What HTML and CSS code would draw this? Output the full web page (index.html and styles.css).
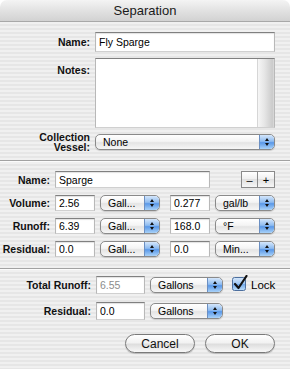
FILE: index.html
```html
<!DOCTYPE html>
<html lang="en">

<head>
    <meta charset="UTF-8">
    <meta name="viewport" content="width=device-width, initial-scale=1.0">
    <title>Separation</title>
    <link rel="stylesheet" href="styles.css">
</head>

<body>
    <div class="window">
        <div class="titlebar">Separation</div>
        <div class="pane">
            <div class="top-form">
                <label class="lbl">Name:</label>
                <div class="field">Fly Sparge</div>

                <label class="lbl lbl-top">Notes:</label>
                <div class="notes"><div class="notes-scroll"></div></div>

                <label class="lbl two-line">Collection<br>Vessel:</label>
                <div class="popup"><span>None</span><i class="arrows"></i></div>
            </div>

            <div class="sep"></div>

            <div class="step-form">
                <label class="lbl">Name:</label>
                <div class="field span3">Sparge</div>
                <div class="stepper"><span>&ndash;</span><span>+</span></div>

                <label class="lbl">Volume:</label>
                <div class="field">2.56</div>
                <div class="popup"><span>Gall...</span><i class="arrows"></i></div>
                <div class="field num2">0.277</div>
                <div class="popup"><span>gal/lb</span><i class="arrows"></i></div>

                <label class="lbl">Runoff:</label>
                <div class="field">6.39</div>
                <div class="popup"><span>Gall...</span><i class="arrows"></i></div>
                <div class="field num2">168.0</div>
                <div class="popup"><span>&deg;F</span><i class="arrows"></i></div>

                <label class="lbl">Residual:</label>
                <div class="field">0.0</div>
                <div class="popup"><span>Gall...</span><i class="arrows"></i></div>
                <div class="field num2">0.0</div>
                <div class="popup"><span>Min...</span><i class="arrows"></i></div>
            </div>

            <div class="sep sep-low"></div>

            <div class="total-form">
                <label class="lbl">Total Runoff:</label>
                <div class="field disabled">6.55</div>
                <div class="popup"><span>Gallons</span><i class="arrows"></i></div>
                <div class="check">
                    <svg width="16" height="17" viewBox="0 0 16 17">
                        <defs>
                            <linearGradient id="cb" x1="0" y1="0" x2="0" y2="1">
                                <stop offset="0" stop-color="#d7e8fb"/>
                                <stop offset="0.5" stop-color="#9cc5f2"/>
                                <stop offset="0.5" stop-color="#6ea7ea"/>
                                <stop offset="1" stop-color="#bfe0fb"/>
                            </linearGradient>
                        </defs>
                        <rect x="0.5" y="2.5" width="13" height="13" rx="2" fill="url(#cb)" stroke="#4d6f9e"/>
                        <path d="M3 9 L6.5 13 L14.5 1" fill="none" stroke="#111" stroke-width="2.2" stroke-linecap="round" stroke-linejoin="round"/>
                    </svg>
                    <span>Lock</span>
                </div>

                <label class="lbl">Residual:</label>
                <div class="field">0.0</div>
                <div class="popup"><span>Gallons</span><i class="arrows"></i></div>
            </div>

            <div class="buttons">
                <button class="push">Cancel</button>
                <button class="push">OK</button>
            </div>
        </div>
    </div>
</body>

</html>
```

FILE: styles.css
```css
body {
    margin: 0;
    background: #ffffff;
    font-family: 'Liberation Sans', Arial, sans-serif;
    font-size: 10.5px;
    color: #000000;
}

.window {
    width: 290px;
    height: 369px;
    overflow: hidden;
}

.titlebar {
    height: 21px;
    line-height: 22px;
    text-align: center;
    font-size: 13px;
    color: #1a1a1a;
    background: linear-gradient(#f4f4f4, #e2e2e2 50%, #d2d2d2);
    border-bottom: 1px solid #a8a8a8;
    border-radius: 7px 7px 0 0;
}

.pane {
    height: 347px;
    padding-top: 10px;
    box-sizing: border-box;
    background: repeating-linear-gradient(to bottom, #f0f0f0 0, #f0f0f0 2px, #e6e6e6 2px, #e6e6e6 4px);
}

.lbl {
    font-weight: bold;
    text-align: right;
    align-self: center;
    white-space: nowrap;
    color: #111;
}

.lbl-top {
    align-self: start;
    padding-top: 6px;
}

.two-line {
    line-height: 10.5px;
}

/* text fields */
.field {
    background: #ffffff;
    border: 1px solid;
    border-color: #808080 #b8b8b8 #d0d0d0 #b8b8b8;
    box-shadow: inset 0 1px 1px rgba(0, 0, 0, 0.12);
    padding-left: 3px;
    display: flex;
    align-items: center;
    box-sizing: border-box;
    white-space: nowrap;
    overflow: hidden;
}

.field.disabled {
    color: #8c8c8c;
}

/* popup menus */
.popup {
    display: flex;
    align-items: center;
    justify-content: space-between;
    border: 1px solid #8a8a8a;
    border-radius: 5px;
    background: linear-gradient(#ffffff, #f4f4f4 45%, #e4e4e4 55%, #f6f6f6);
    box-shadow: 0 1px 1px rgba(0, 0, 0, 0.15);
    box-sizing: border-box;
    height: 16px;
    overflow: hidden;
    align-self: center;
}

.popup span {
    padding-left: 7px;
    white-space: nowrap;
}

.arrows {
    width: 14px;
    height: 100%;
    flex: none;
    border-left: 1px solid #6b8fc2;
    background:
        url("data:image/svg+xml;utf8,<svg xmlns='http://www.w3.org/2000/svg' width='14' height='14'><path d='M5 6 L7 3 L9 6 Z M5 8 L7 11 L9 8 Z' fill='%23111'/></svg>") center / 14px 14px no-repeat,
        linear-gradient(#d4e6fb, #8fbcf0 45%, #5a98e8 55%, #a9d2f8);
    border-radius: 0 4px 4px 0;
}

/* top section */
.top-form {
    display: grid;
    grid-template-columns: 90px 180px;
    grid-template-rows: 20px 70px 16px;
    column-gap: 5px;
    row-gap: 6px;
}

.notes {
    display: flex;
    justify-content: flex-end;
    background: #ffffff;
    border: 1px solid;
    border-color: #808080 #b8b8b8 #d0d0d0 #b8b8b8;
}

.notes-scroll {
    width: 16px;
    background: linear-gradient(to right, #f6f6f6, #e6e6e6 40%, #cbcbcb 90%, #dcdcdc);
    border-left: 1px solid #d6d6d6;
}

.sep {
    margin-top: 10px;
    border-top: 1px solid #a2a2a2;
    border-bottom: 1px solid #fbfbfb;
}

.sep-low {
    margin-top: 11px;
}

/* sparge step section */
.step-form {
    margin-top: 9px;
    display: grid;
    grid-template-columns: 50px 40px 60px 45px 60px;
    grid-template-rows: 17px 16px 16px 16px;
    column-gap: 5px;
    row-gap: 7px;
}

.num2 {
    width: 40px;
    justify-self: end;
}

.span3 {
    grid-column: span 3;
}

.stepper {
    justify-self: end;
    display: flex;
}

.stepper span {
    width: 17px;
    height: 17px;
    box-sizing: border-box;
    border: 1px solid #8a8a8a;
    background: linear-gradient(#ffffff, #eeeeee 50%, #e0e0e0 50%, #f6f6f6);
    display: flex;
    align-items: center;
    justify-content: center;
    font-size: 11px;
}

.stepper span + span {
    border-left: none;
}

/* totals */
.total-form {
    margin-top: 6px;
    display: grid;
    grid-template-columns: 90px 49px 73px auto;
    grid-template-rows: 18px 18px;
    column-gap: 5px;
    row-gap: 8px;
    padding-left: 1px;
}

.check {
    display: flex;
    align-items: center;
    gap: 3px;
    margin-left: 4px;
    font-size: 11.5px;
}

.check svg {
    margin-top: -3px;
}

.buttons {
    display: flex;
    justify-content: flex-end;
    gap: 10px;
    padding-right: 15px;
    margin-top: 14px;
}

.push {
    width: 70px;
    height: 19px;
    padding: 0;
    font-family: 'Liberation Sans', Arial, sans-serif;
    font-size: 12px;
    color: #111;
    border: 1px solid #7a7a7a;
    border-radius: 10px;
    background: linear-gradient(#ffffff, #f2f2f2 45%, #dedede 55%, #f8f8f8);
    box-shadow: 0 1px 1px rgba(0, 0, 0, 0.2);
}
```
